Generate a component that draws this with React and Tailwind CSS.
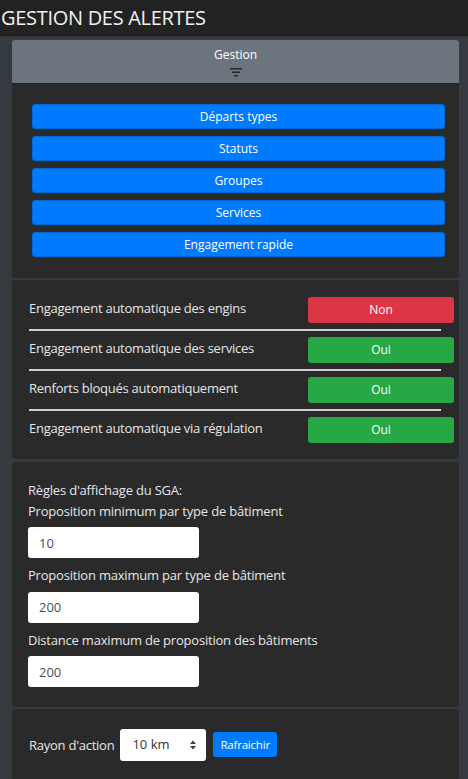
const font = { fontFamily: '"Open Sans", "Noto Sans", sans-serif' };

const liens = ['Départs types', 'Statuts', 'Groupes', 'Services', 'Engagement rapide'];

const options = [
  { label: 'Engagement automatique des engins', actif: false },
  { label: 'Engagement automatique des services', actif: true },
  { label: 'Renforts bloqués automatiquement', actif: true },
  { label: 'Engagement automatique via régulation', actif: true },
];

function FilterIcon() {
  return (
    <svg width="12" height="9" viewBox="0 0 12 9" className="text-[#2b2b2b]">
      <rect x="0" y="0" width="12" height="1.5" fill="currentColor" />
      <rect x="2" y="3.5" width="8" height="1.5" fill="currentColor" />
      <rect x="4" y="7" width="4" height="1.5" fill="currentColor" />
    </svg>
  );
}

function Champ({ label, valeur, first }) {
  return (
    <>
      <p className={`text-[13px] tracking-[-0.2px] text-[#e6e6e6] mb-[6px] ${first ? 'mt-[1px]' : 'mt-[8px]'}`}>
        {label}
      </p>
      <input
        defaultValue={valeur}
        className="w-[171px] h-[31px] rounded-[3px] bg-white px-[11px] text-[13px] text-[#495057] outline-none"
      />
    </>
  );
}

export default function App() {
  return (
    <div className="min-h-[779px] bg-[#343a40]" style={font}>
      <div className="h-[36px] bg-[#222222] border-b border-[#1b1b1b] flex items-center">
        <h1 className="text-[20px] tracking-[-0.3px] text-[#f2f2f2] leading-none pl-[1px]">GESTION DES ALERTES</h1>
      </div>

      <div className="px-[12px] pt-[4px] pr-[9px]">
        <div className="rounded-[3px] overflow-hidden">
          <div className="h-[43px] bg-[#6c757d] flex flex-col items-center pt-[9px]">
            <span className="text-[12px] text-white leading-none">Gestion</span>
            <div className="mt-[7px]">
              <FilterIcon />
            </div>
          </div>
          <div className="bg-[#2a2a2a] pl-[20px] pr-[14px] pt-[20px] pb-[21px] flex flex-col gap-[7px] border-t border-[#222]">
            {liens.map((l) => (
              <button
                key={l}
                className="h-[25px] rounded-[3px] bg-[#007bff] text-white text-[12px] border border-[#0069d9]"
              >
                {l}
              </button>
            ))}
          </div>
        </div>

        <div className="mt-[2px] bg-[#2a2a2a] rounded-[3px] pl-[17px] pr-[5px] pt-[17px] pb-[16px]">
          {options.map((o, i) => (
            <div key={o.label}>
              {i > 0 && <div className="h-[2px] bg-[#d0d0d0] mr-[13px] my-[6px]" />}
              <div className="flex items-start justify-between">
                <span className="text-[13px] tracking-[-0.25px] text-[#e6e6e6] pt-[2px]">{o.label}</span>
                <button
                  className={`w-[146px] h-[26px] rounded-[3px] text-white text-[12px] ${
                    o.actif ? 'bg-[#28a745]' : 'bg-[#dc3545]'
                  }`}
                >
                  {o.actif ? 'Oui' : 'Non'}
                </button>
              </div>
            </div>
          ))}
        </div>

        <div className="mt-[3px] bg-[#2a2a2a] rounded-[3px] pl-[16px] pt-[19px] pb-[20px]">
          <p className="text-[13px] tracking-[-0.2px] text-[#e6e6e6]">Règles d'affichage du SGA:</p>
          <Champ first label="Proposition minimum par type de bâtiment" valeur="10" />
          <Champ label="Proposition maximum par type de bâtiment" valeur="200" />
          <Champ label="Distance maximum de proposition des bâtiments" valeur="200" />
        </div>

        <div className="mt-[2px] bg-[#2a2a2a] rounded-[3px] pl-[17px] h-[71px] flex items-center">
          <span className="text-[13px] tracking-[-0.25px] text-[#e6e6e6] mr-[6px] mt-[2px]">Rayon d'action</span>
          <div className="w-[86px] h-[32px] bg-white rounded-[3px] flex items-center justify-between pl-[12px] pr-[10px]">
            <span className="text-[13px] text-[#333]">10 km</span>
            <svg width="6" height="10" viewBox="0 0 6 10">
              <path d="M0 4 L3 0.5 L6 4 Z M0 6 L3 9.5 L6 6 Z" fill="#444" />
            </svg>
          </div>
          <button className="ml-[7px] h-[25px] px-[7px] rounded-[3px] bg-[#007bff] text-white text-[11.5px] tracking-[-0.2px]">
            Rafraichir
          </button>
        </div>
      </div>
    </div>
  );
}
